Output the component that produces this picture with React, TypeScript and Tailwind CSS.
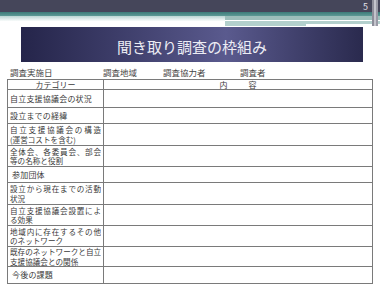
import React from "react";

const rows: { h: number; lines: string[]; indent?: boolean }[] = [
  { h: 18, lines: ["自立支援協議会の状況"] },
  { h: 16, lines: ["設立までの経緯"] },
  { h: 22, lines: ["自立支援協議会の構造", "(運営コストを含む)"] },
  { h: 21, lines: ["全体会、各委員会、部会", "等の名称と役割"] },
  { h: 16, lines: ["参加団体"], indent: true },
  { h: 22, lines: ["設立から現在までの活動", "状況"] },
  { h: 21, lines: ["自立支援協議会設置によ", "る効果"] },
  { h: 21, lines: ["地域内に存在するその他", "のネットワーク"] },
  { h: 20, lines: ["既存のネットワークと自立", "支援協議会との関係"] },
  { h: 17, lines: ["今後の課題"], indent: true },
];

const font = { fontFamily: '"Noto Sans CJK JP", "Noto Sans", sans-serif' };

export default function App() {
  return (
    <div
      className="relative w-[380px] h-[285px] overflow-hidden bg-white text-[#3a3a3a]"
      style={font}
    >
      {/* top decoration */}
      <div className="relative h-[27px]">
        <div className="h-[12px] bg-[#45465a] flex justify-end items-center pr-[12px]">
          <span className="text-[9px] leading-none text-[#e2e2ea]">5</span>
        </div>
        <div className="h-[4px] bg-gradient-to-b from-[#3c7c79] to-[#5d9a96]" />
        <div className="flex h-[11px]">
          <div className="w-[225px] bg-gradient-to-b from-[#b9d6d3] via-white to-white" />
          <div className="flex-1 flex flex-col">
            <div className="h-[4px] bg-[#9cbfbb]" />
            <div className="h-[1px] mr-[20px] bg-white" />
            <div className="h-[3px] bg-[#b3d0cd]" />
            <div className="h-[2px] flex">
              <div className="w-[81px] bg-[#b3d0cd]" />
              <div className="flex-1 bg-white" />
            </div>
            <div className="flex-1 bg-white" />
          </div>
        </div>
        <div className="absolute right-[2px] top-0 w-[6px] h-[26px] flex">
          <div className="w-[2px] bg-[#8e8e9a]" />
          <div className="w-[2px] bg-[#c4c4cc]" />
          <div className="w-[2px] bg-[#9a9aa6]" />
        </div>
      </div>

      {/* title */}
      <div className="ml-[21px] w-[342px] h-[35px] bg-gradient-to-r from-[#25254a] via-[#5a5a8e] via-60% to-[#2a2a4e] flex items-center justify-center">
        <span className="text-[15px] leading-none text-[#ececf4] pt-[3px]">
          聞き取り調査の枠組み
        </span>
      </div>

      {/* meta row */}
      <div className="h-[17px] flex items-end pb-[3px] pl-[10px] text-[8.5px] leading-none text-[#444]">
        <span className="w-[93px]">調査実施日</span>
        <span className="w-[60px]">調査地域</span>
        <span className="w-[77px]">調査協力者</span>
        <span>調査者</span>
      </div>

      {/* table */}
      <div className="ml-[7px] w-[366px] border-t border-l border-r border-[#7a7a7a]">
        <div className="h-[10px] flex border-b border-[#7a7a7a] text-[8px] leading-none">
          <div className="w-[96px] border-r border-[#7a7a7a] flex items-center justify-center">
            カテゴリー
          </div>
          <div className="flex-1 flex items-center justify-center gap-[21px]">
            <span>内</span>
            <span>容</span>
          </div>
        </div>
        {rows.map((r, i) => (
          <div
            key={i}
            className="flex border-b border-[#7a7a7a]"
            style={{ height: r.h }}
          >
            <div
              className={
                "w-[96px] border-r border-[#7a7a7a] flex flex-col justify-center " +
                (r.indent ? "pl-[4px] pr-[2px]" : "pl-[2px] pr-[2px]")
              }
            >
              {r.lines.length === 1 ? (
                <div className="text-[8px] leading-[10px] tracking-[0.2px] whitespace-nowrap">
                  {r.lines[0]}
                </div>
              ) : (
                <>
                  <div className="text-[7.6px] leading-[9.5px] text-justify [text-align-last:justify] whitespace-nowrap overflow-hidden">
                    {r.lines[0]}
                  </div>
                  <div className="text-[7.6px] leading-[9.5px] whitespace-nowrap">
                    {r.lines[1]}
                  </div>
                </>
              )}
            </div>
            <div className="flex-1" />
          </div>
        ))}
      </div>
    </div>
  );
}
